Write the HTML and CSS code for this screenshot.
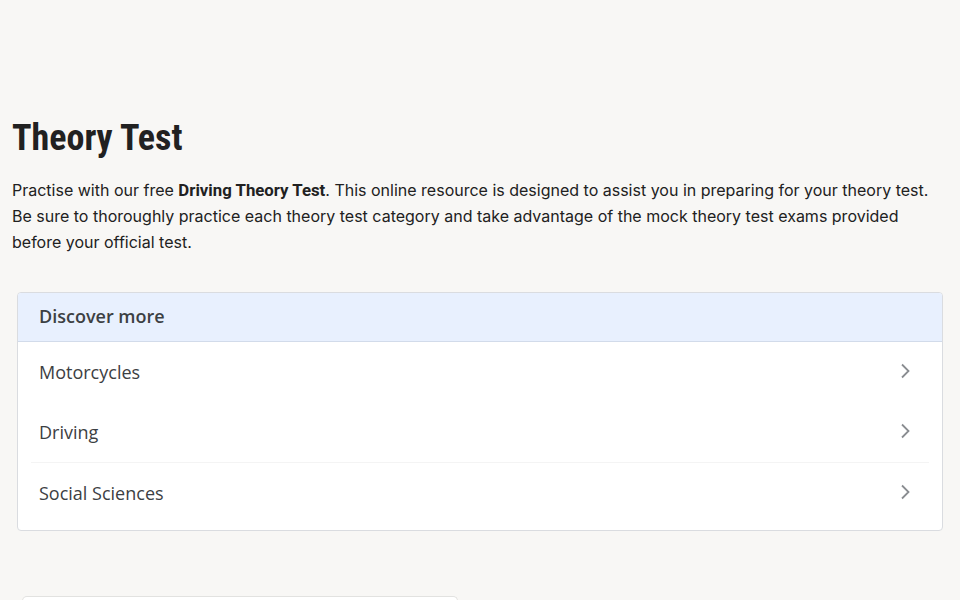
FILE: index.html
```html
<!DOCTYPE html>
<html lang="en">
<head>
<meta charset="utf-8">
<title>Theory Test</title>
<link rel="stylesheet" href="styles.css">
</head>
<body>
<main class="page">
  <h1 class="title">Theory Test</h1>
  <p class="intro">Practise with our free <strong>Driving Theory Test</strong>. This online resource is designed to assist you in preparing for your theory test. Be sure to thoroughly practice each theory test category and take advantage of the mock theory test exams provided before your official test.</p>
  <section class="discover">
    <div class="discover-head">Discover more</div>
    <ul class="discover-list">
      <li class="discover-item"><span>Motorcycles</span><svg class="chev" viewBox="0 0 24 24" width="24" height="24"><path d="M9 5.5 15.5 12 9 18.5" fill="none" stroke="#8a8d91" stroke-width="1.8"/></svg></li>
      <li class="discover-item"><span>Driving</span><svg class="chev" viewBox="0 0 24 24" width="24" height="24"><path d="M9 5.5 15.5 12 9 18.5" fill="none" stroke="#8a8d91" stroke-width="1.8"/></svg></li>
      <li class="discover-item discover-item-sep"><span>Social Sciences</span><svg class="chev" viewBox="0 0 24 24" width="24" height="24"><path d="M9 5.5 15.5 12 9 18.5" fill="none" stroke="#8a8d91" stroke-width="1.8"/></svg></li>
    </ul>
  </section>
  <div class="next-card"></div>
</main>
</body>
</html>
```
FILE: styles.css
```css
html, body {
  margin: 0;
  padding: 0;
  background: #f8f7f5;
}
body {
  font-family: Inter, Roboto, "Liberation Sans", sans-serif;
  color: #212121;
}
.page {
  padding: 116px 12px 0;
}
.title {
  margin: 0;
  font-family: "Roboto Condensed", Roboto, sans-serif;
  font-weight: 700;
  font-size: 36px;
  line-height: 44px;
  color: #212121;
}
.intro {
  margin: 17px 0 0;
  font-size: 16px;
  line-height: 26px;
  color: #212121;
}
.intro strong {
  font-family: Roboto, Inter, sans-serif;
  font-weight: 700;
  font-size: 16.8px;
}
.discover {
  margin: 37px 5px 0;
  background: #fff;
  border: 1px solid #dadce0;
  border-radius: 4px;
  overflow: hidden;
  font-family: "Open Sans", Roboto, sans-serif;
}
.discover-head {
  height: 49px;
  display: flex;
  align-items: center;
  padding: 0 21px 2px;
  box-sizing: border-box;
  background: #e8f0fe;
  border-bottom: 1px solid #d2dbea;
  font-size: 18px;
  font-weight: 600;
  color: #3c4043;
}
.discover-list {
  list-style: none;
  margin: 0;
  padding: 0 13px 8px;
}
.discover-item {
  height: 60px;
  display: flex;
  align-items: center;
  justify-content: space-between;
  padding: 0 24px 0 8px;
  font-size: 18px;
  color: #3c4043;
}
.discover-item-sep {
  border-top: 1px solid #f4f4f4;
  height: 60px;
  box-sizing: border-box;
}
.chev {
  margin-right: -12px;
  margin-top: -2px;
}
.next-card {
  margin: 65px 490px 0 10px;
  height: 4px;
  background: #fff;
  border: 1px solid #e2e2e0;
  border-bottom: 0;
  border-radius: 8px 8px 0 0;
}
```
